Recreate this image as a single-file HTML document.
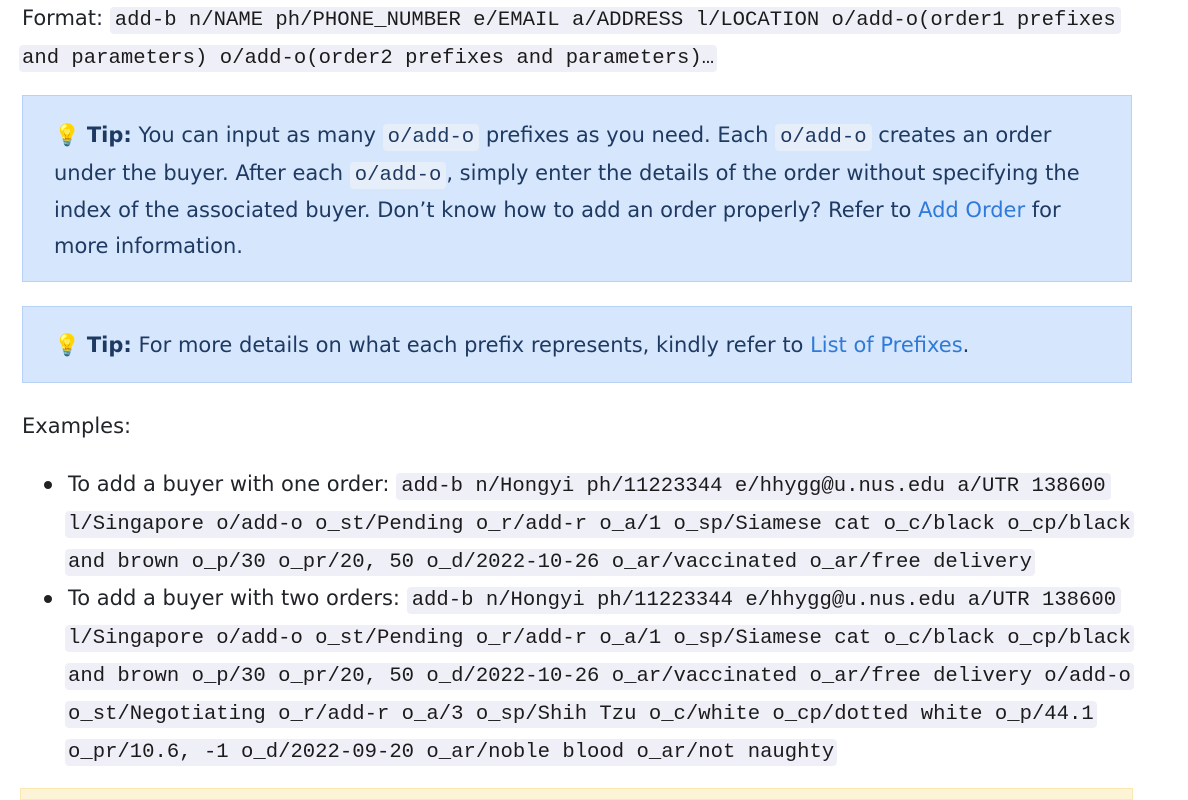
<!DOCTYPE html>
<html><head><meta charset="utf-8"><style>
body{margin:0;background:#fff;width:1188px;height:796px;overflow:hidden;position:relative;font-family:"DejaVu Sans","Liberation Sans",sans-serif;font-size:21px;color:#212529}
.l{position:absolute;white-space:nowrap;line-height:30px}
code{font-family:"Liberation Mono",monospace;font-size:20.6px;background:#efeff8;border-radius:4px;padding:2px 5px;color:#1b1b1b}
.c code{padding:2px 3px}
.tipbox{position:absolute;left:22px;width:1108px;background:#d6e6fc;border:1px solid #b6d2f4}
.tip{color:#1e3a62}
.tip code{background:#e6eefa;color:#1e3a62}
a{color:#2f7ad8;text-decoration:none}
.bul{position:absolute;width:8px;height:8px;border-radius:50%;background:#222}
</style></head><body>
<div class="l" style="left:22px;top:3px">Format: <code>add-b n/NAME ph/PHONE_NUMBER e/EMAIL a/ADDRESS l/LOCATION o/add-o(order1 prefixes</code></div>
<div class="l c" style="left:19px;top:41px"><code>and parameters) o/add-o(order2 prefixes and parameters)…</code></div>

<div class="tipbox" style="top:95px;height:185px"></div>
<div class="l tip" style="left:54px;top:120px">💡 <b>Tip:</b> You can input as many <code>o/add-o</code> prefixes as you need. Each <code>o/add-o</code> creates an order</div>
<div class="l tip" style="left:54px;top:158px">under the buyer. After each <code>o/add-o</code>, simply enter the details of the order without specifying the</div>
<div class="l tip" style="left:54px;top:195px">index of the associated buyer. Don’t know how to add an order properly? Refer to <a>Add Order</a> for</div>
<div class="l tip" style="left:54px;top:231px">more information.</div>

<div class="tipbox" style="top:306px;height:75px"></div>
<div class="l tip" style="left:54px;top:330px">💡 <b>Tip:</b> For more details on what each prefix represents, kindly refer to <a>List of Prefixes</a>.</div>

<div class="l" style="left:22px;top:411px">Examples:</div>

<div class="bul" style="left:44px;top:481px"></div>
<div class="l" style="left:68px;top:469px">To add a buyer with one order: <code>add-b n/Hongyi ph/11223344 e/hhygg@u.nus.edu a/UTR 138600</code></div>
<div class="l c" style="left:65px;top:507px"><code>l/Singapore o/add-o o_st/Pending o_r/add-r o_a/1 o_sp/Siamese cat o_c/black o_cp/black</code></div>
<div class="l c" style="left:65px;top:545px"><code>and brown o_p/30 o_pr/20, 50 o_d/2022-10-26 o_ar/vaccinated o_ar/free delivery</code></div>

<div class="bul" style="left:44px;top:595px"></div>
<div class="l" style="left:68px;top:583px">To add a buyer with two orders: <code>add-b n/Hongyi ph/11223344 e/hhygg@u.nus.edu a/UTR 138600</code></div>
<div class="l c" style="left:65px;top:621px"><code>l/Singapore o/add-o o_st/Pending o_r/add-r o_a/1 o_sp/Siamese cat o_c/black o_cp/black</code></div>
<div class="l c" style="left:65px;top:659px"><code>and brown o_p/30 o_pr/20, 50 o_d/2022-10-26 o_ar/vaccinated o_ar/free delivery o/add-o</code></div>
<div class="l c" style="left:65px;top:697px"><code>o_st/Negotiating o_r/add-r o_a/3 o_sp/Shih Tzu o_c/white o_cp/dotted white o_p/44.1</code></div>
<div class="l c" style="left:65px;top:735px"><code>o_pr/10.6, -1 o_d/2022-09-20 o_ar/noble blood o_ar/not naughty</code></div>

<div style="position:absolute;left:20px;top:788px;width:1111px;height:10px;background:#fdf3d6;border:1px solid #fbe8b0"></div>
</body></html>
